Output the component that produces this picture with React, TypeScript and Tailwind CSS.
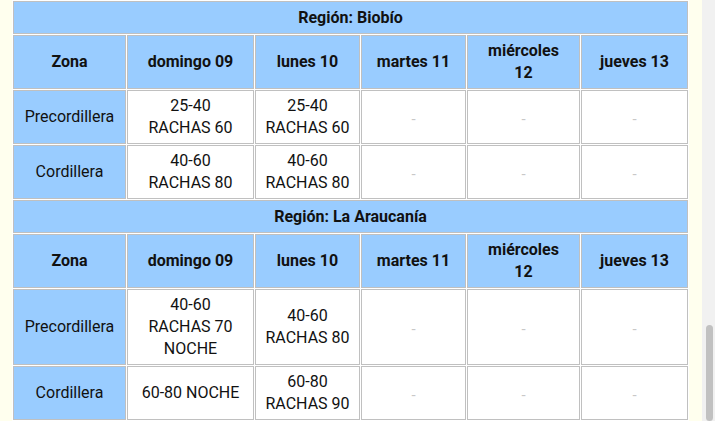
import React from "react";

type Row = { zona: string; days: React.ReactNode[] };
type Region = { name: string; rows: Row[] };

const dias = ["domingo 09", "lunes 10", "martes 11", "miércoles 12", "jueves 13"];

const regiones: Region[] = [
    {
        name: "Región: Biobío",
        rows: [
            { zona: "Precordillera", days: [["25-40", "RACHAS 60"], ["25-40", "RACHAS 60"], null, null, null] },
            { zona: "Cordillera", days: [["40-60", "RACHAS 80"], ["40-60", "RACHAS 80"], null, null, null] },
        ],
    },
    {
        name: "Región: La Araucanía",
        rows: [
            { zona: "Precordillera", days: [["40-60", "RACHAS 70", "NOCHE"], ["40-60", "RACHAS 80"], null, null, null] },
            { zona: "Cordillera", days: [["60-80 NOCHE"], ["60-80", "RACHAS 90"], null, null, null] },
        ],
    },
] as Region[];

const cell = "border border-[#c0c0c0] text-center align-middle px-1 leading-[22px]";

const Lines = ({ lines }: { lines: string[] }) => (
    <>
        {lines.map((l, i) => (
            <span key={i} className="block">{l}</span>
        ))}
    </>
);

// celdas sin pronóstico
const Dash = () => <span className="text-[#c8c8c8] text-[15px] inline-block translate-y-[2px]">-</span>;

const RegionBlock = ({ region }: { region: Region }) => (
    <tbody>
        <tr>
            <th colSpan={6} className={`${cell} bg-[#99ccff] font-bold h-[33px]`}>
                {region.name}
            </th>
        </tr>
        <tr>
            <th className={`${cell} bg-[#99ccff] font-bold h-[54px]`}>Zona</th>
            {dias.map((d) => (
                <th key={d} className={`${cell} bg-[#99ccff] font-bold h-[54px]`}>
                    {d === "miércoles 12" ? <Lines lines={["miércoles", "12"]} /> : d}
                </th>
            ))}
        </tr>
        {region.rows.map((r) => {
            const tall = r.days.some((d) => Array.isArray(d) && d.length > 2);
            return (
                <tr key={r.zona}>
                    <td className={`${cell} bg-[#99ccff] ${tall ? "h-[76px]" : "h-[54px]"}`}>{r.zona}</td>
                    {r.days.map((d, i) => (
                        <td key={i} className={`${cell} bg-white`}>
                            {Array.isArray(d) ? <Lines lines={d as string[]} /> : <Dash />}
                        </td>
                    ))}
                </tr>
            );
        })}
    </tbody>
);

export default function App() {
    return (
        <div className="flex w-[715px] h-[421px] overflow-hidden bg-[#ffffee] text-[#111] text-[16px] font-['Roboto',sans-serif]">
            <div className="w-[702px] shrink-0 pl-[12px]">
                <table className="table-fixed w-[677px] border-separate border-spacing-px bg-white">
                    <colgroup>
                        <col className="w-[113px]" />
                        <col className="w-[127px]" />
                        <col className="w-[105px]" />
                        <col className="w-[105px]" />
                        <col className="w-[113px]" />
                        <col className="w-[107px]" />
                    </colgroup>
                    {regiones.map((r) => (
                        <RegionBlock key={r.name} region={r} />
                    ))}
                </table>
            </div>
            <div className="flex-1 flex flex-col bg-[#f1f1f1] pl-[4px] pr-[2px]">
                <div className="h-[325px] shrink-0" />
                <div className="flex-1 rounded-full bg-[#c1c1c1]" />
            </div>
        </div>
    );
}
